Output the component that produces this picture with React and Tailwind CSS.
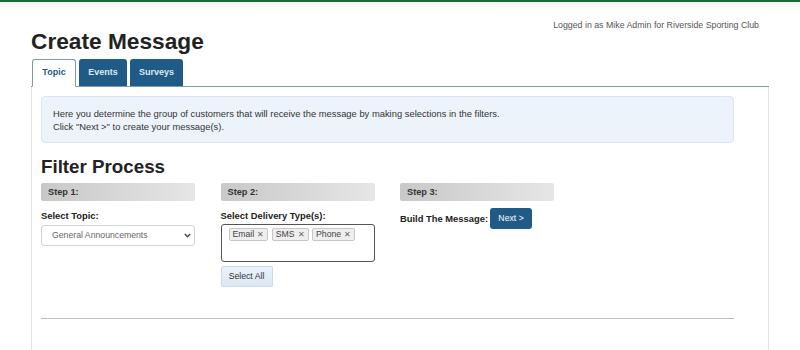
export default function App() {
  const font = { fontFamily: '"Liberation Sans", Arial, sans-serif' };
  return (
    <div className="w-[800px] h-[350px] bg-white overflow-hidden text-[#333]" style={font}>
      <div className="h-[2px] bg-[#1d6a36]" />
      <div className="h-[8px] bg-gradient-to-b from-[#f1f6f2] to-white" />
      <div className="pl-[31px] pr-[31px]">
        <div className="flex justify-end pr-[10px] pt-[10px] h-[18px] text-[8.8px] text-[#555] leading-[11px]">
          Logged in as Mike Admin for Riverside Sporting Club
        </div>
        <h1 className="text-[22.7px] font-bold leading-[27px] text-[#222]">Create Message</h1>
        <div className="flex items-end h-[28px] mt-[4px] border-b border-[#7f9aa5]">
          <div className="ml-px w-[44px] h-[28px] -mb-px bg-white border border-[#7f9aa5] border-b-white rounded-t-[3px] flex items-center justify-center text-[9px] font-bold text-[#1f5a85]">
            Topic
          </div>
          <div className="ml-[3px] w-[48px] h-[27px] bg-[#1f5b86] rounded-t-[3px] flex items-center justify-center text-[9px] font-bold text-[#dde8f1]">
            Events
          </div>
          <div className="ml-[3px] w-[53px] h-[27px] bg-[#1f5b86] rounded-t-[3px] flex items-center justify-center text-[9px] font-bold text-[#dde8f1]">
            Surveys
          </div>
        </div>
        <div className="border-x border-[#dfe3e6] px-[9px] pt-[9px] h-[300px]">
          <div className="w-[693px] h-[47px] bg-[#edf3fb] border border-[#dbe5f0] rounded-[4px] pl-[11px] pt-[10px] text-[9.4px] leading-[13px] text-[#333]">
            <div>Here you determine the group of customers that will receive the message by making selections in the filters.</div>
            <div>Click "Next &gt;" to create your message(s).</div>
          </div>
          <h2 className="mt-[12px] text-[18.75px] font-bold leading-[24px] text-[#222]">Filter Process</h2>
          <div className="flex gap-[25.5px] mt-[4px]">
            <div className="w-[154px]">
              <div className="h-[18px] rounded-[2px] bg-gradient-to-r from-[#c8c8c8] to-[#e6e6e6] pl-[7px] text-[9.2px] font-bold leading-[18px] text-[#333]">Step 1:</div>
              <div className="mt-[8px] text-[9.4px] font-bold leading-[13px] text-[#222]">Select Topic:</div>
              <div className="mt-[3px] h-[21px] border border-[#cfd4d8] rounded-[3px] flex items-center justify-between pl-[10px] pr-[3px] text-[8.7px] text-[#666] bg-white">
                <span>General Announcements</span>
                <svg width="7" height="5" viewBox="0 0 7 5"><path d="M0.8 1 L3.5 3.8 L6.2 1" fill="none" stroke="#444" strokeWidth="1.4" /></svg>
              </div>
            </div>
            <div className="w-[154px]">
              <div className="h-[18px] rounded-[2px] bg-gradient-to-r from-[#c8c8c8] to-[#e6e6e6] pl-[7px] text-[9.2px] font-bold leading-[18px] text-[#333]">Step 2:</div>
              <div className="mt-[8px] text-[9.4px] font-bold leading-[13px] text-[#222]">Select Delivery Type(s):</div>
              <div className="mt-[2px] h-[38px] border border-[#555] rounded-[3px] bg-white pl-[7px] pt-[3px] flex items-start gap-[3.5px]">
                {["Email", "SMS", "Phone"].map((t) => (
                  <span key={t} className="h-[13px] px-[3px] bg-[#eeeeee] border border-[#c6c6c6] rounded-[2px] text-[8.7px] leading-[11px] text-[#444] flex items-center gap-[3px]">
                    {t}<span className="text-[7.5px] text-[#666]">✕</span>
                  </span>
                ))}
              </div>
              <div className="mt-[4px] w-[52px] h-[21px] border border-[#cbdbe9] rounded-[2px] bg-gradient-to-b from-[#eaf2fb] to-[#dce8f5] flex items-center justify-center text-[8.7px] text-[#333]">
                Select All
              </div>
            </div>
            <div className="w-[154px]">
              <div className="h-[18px] rounded-[2px] bg-gradient-to-r from-[#c8c8c8] to-[#e6e6e6] pl-[7px] text-[9.2px] font-bold leading-[18px] text-[#333]">Step 3:</div>
              <div className="mt-[7px] flex items-center gap-[2px]">
                <span className="text-[9.4px] font-bold leading-[13px] text-[#222]">Build The Message:</span>
                <span className="w-[42px] h-[21px] rounded-[3px] bg-[#1f5b86] flex items-center justify-center text-[8.7px] text-white">Next &gt;</span>
              </div>
            </div>
          </div>
          <div className="mt-[31px] w-[693px] h-[1px] bg-[#bdbdbd]" />
        </div>
      </div>
    </div>
  );
}
